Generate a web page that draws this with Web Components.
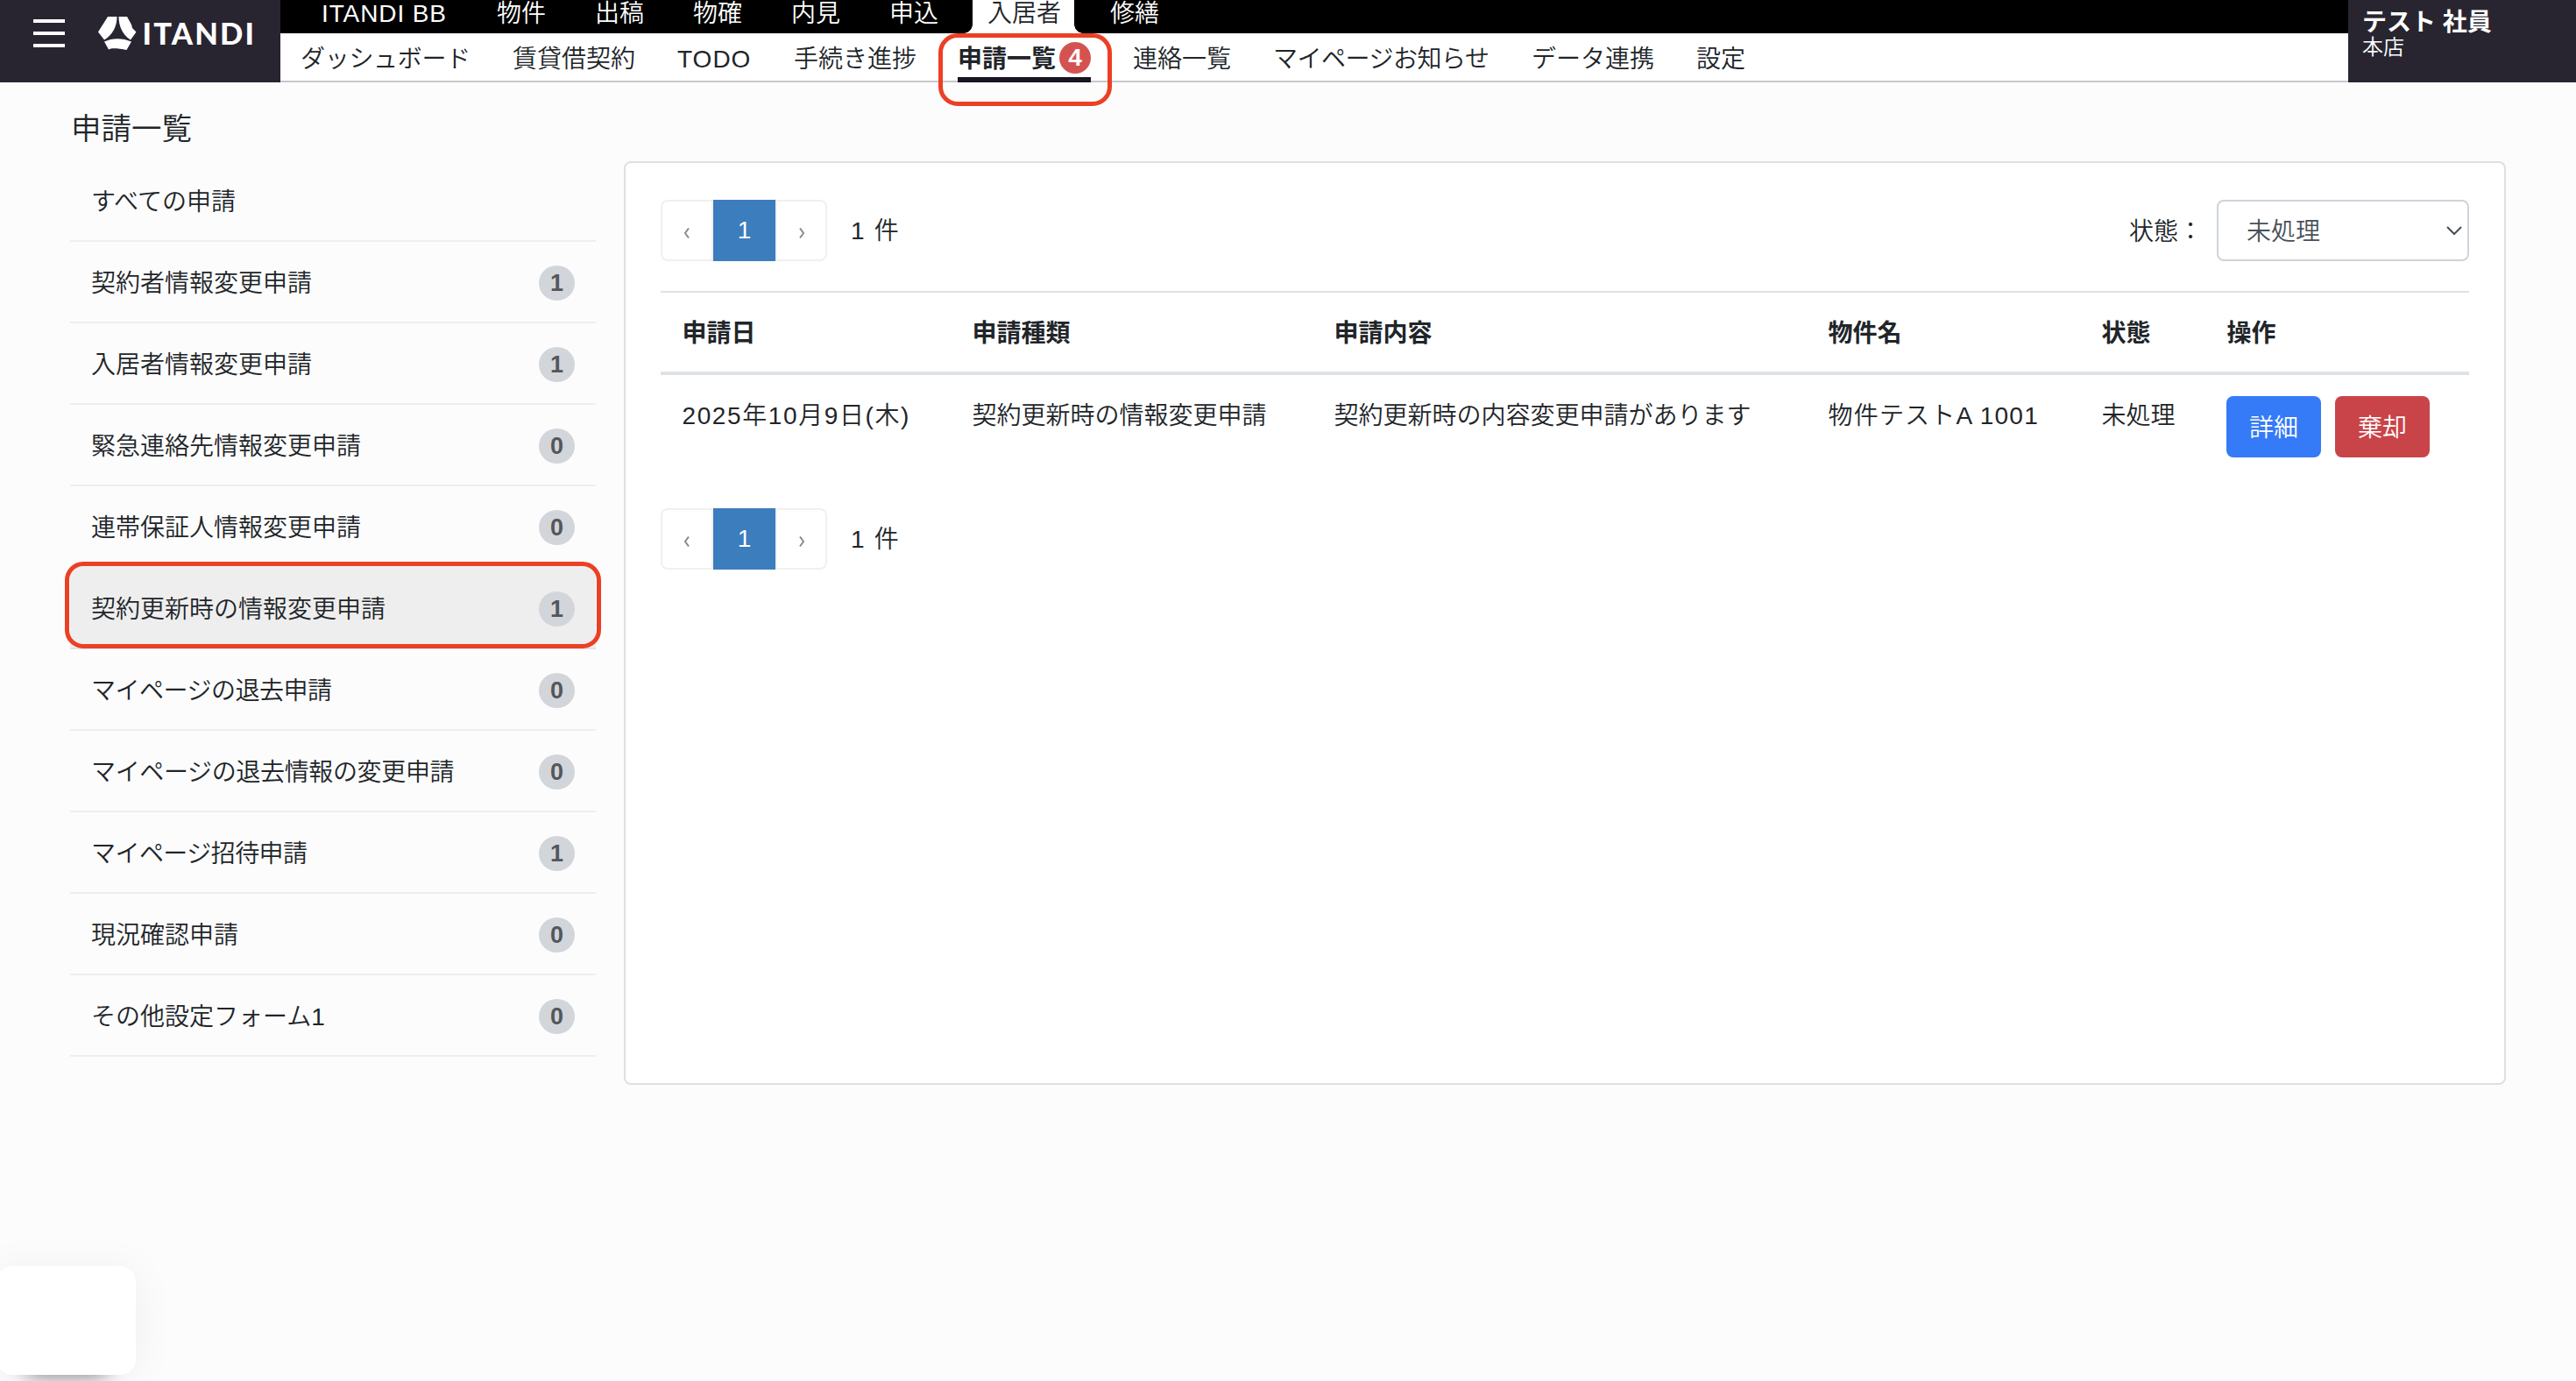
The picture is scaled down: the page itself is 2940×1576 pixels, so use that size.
<!DOCTYPE html>
<html lang="ja">
<head>
<meta charset="utf-8">
<title>申請一覧</title>
<style>
  html { height: 100%; overflow: hidden; }
  body {
    margin: 0;
    min-height: 100%;
    background: #fcfcfc;
    color: #212529;
    font: 28px/42px "Liberation Sans", "Noto Sans CJK JP", sans-serif;
    font-weight: 350;
  }
  main { display: flex; padding: 0 80px; gap: 32px; }
  aside { width: 600px; }
  h1 { margin: 0; height: 89px; box-sizing: border-box; padding: 28px 1px 0; font-size: 34.5px; line-height: 50px; font-weight: inherit; }
</style>
</head>
<body>
<app-header>
  <top-item slot="top" style="width:145px;letter-spacing:.9px;text-indent:1px">ITANDI BB</top-item>
  <top-item slot="top">物件</top-item>
  <top-item slot="top">出稿</top-item>
  <top-item slot="top">物確</top-item>
  <top-item slot="top">内見</top-item>
  <top-item slot="top">申込</top-item>
  <top-item slot="top" active>入居者</top-item>
  <top-item slot="top">修繕</top-item>

  <sub-item slot="sub" style="width:194px;letter-spacing:-.3px">ダッシュボード</sub-item>
  <sub-item slot="sub" style="width:140px">賃貸借契約</sub-item>
  <sub-item slot="sub" style="width:85px;letter-spacing:1px">TODO</sub-item>
  <sub-item slot="sub" style="width:139px">手続き進捗</sub-item>
  <sub-item slot="sub" active badge="4" style="width:152px">申請一覧</sub-item>
  <sub-item slot="sub" style="width:112px">連絡一覧</sub-item>
  <sub-item slot="sub" style="width:247px;letter-spacing:-.5px">マイページお知らせ</sub-item>
  <sub-item slot="sub" style="width:140px">データ連携</sub-item>
  <sub-item slot="sub" style="width:56px">設定</sub-item>

  <span slot="user">テスト 社員</span>
  <span slot="shop">本店</span>
</app-header>

<main>
  <aside>
    <h1>申請一覧</h1>
    <side-item>すべての申請</side-item>
    <side-item count="1">契約者情報変更申請</side-item>
    <side-item count="1">入居者情報変更申請</side-item>
    <side-item count="0">緊急連絡先情報変更申請</side-item>
    <side-item count="0">連帯保証人情報変更申請</side-item>
    <side-item count="1" active>契約更新時の情報変更申請</side-item>
    <side-item count="0" style="letter-spacing:-.5px">マイページの退去申請</side-item>
    <side-item count="0" style="letter-spacing:-.35px">マイページの退去情報の変更申請</side-item>
    <side-item count="1" style="letter-spacing:-.55px">マイページ招待申請</side-item>
    <side-item count="0">現況確認申請</side-item>
    <side-item count="0">その他設定フォーム1</side-item>
  </aside>
  <request-panel></request-panel>
</main>
<chat-launcher></chat-launcher>

<script>
  // base class: puts the element's template string into an open shadow root
  class BaseElement extends HTMLElement {
    constructor() {
      super();
      this.attachShadow({ mode: 'open' });
      this.shadowRoot.innerHTML = this.render();
    }
  }

  class AppHeader extends BaseElement {
    render() {
      return `
        <style>
          :host { display: flex; height: 94px; }
          .brand {
            box-sizing: border-box;
            width: 320px;
            padding: 0 0 0 38px;
            background: #282530;
          }
          .brand svg { display: block; }
          .nav { flex: 1; display: flex; flex-direction: column; }
          .top { display: flex; height: 38px; padding-left: 18px; background: #000; color: #fff; }
          .sub {
            display: flex;
            gap: 48px;
            height: 54px;
            padding-left: 23px;
            background: #fff;
            border-bottom: 2px solid #c8c7cf;
          }
          .user {
            box-sizing: border-box;
            width: 260px;
            padding: 10px 16px 0;
            background: #282530;
            color: #fff;
          }
          .name { font-weight: 700; line-height: 31px; }
          .shop { font-size: 24px; line-height: 26px; }
        </style>
        <div class="brand">
          <svg width="260" height="94" viewBox="38 0 260 94" fill="#fff">
            <path d="M38 22h36v4H38zM38 36h36v4H38zM38 50h36v4H38z"/>
            <path d="M123 19h10.500c0 11-5 21-14.500 26.500L112 36.500z"/>
            <path d="M135.500 19H145l5 9 1 4 4.500 4.500-6.500 9C140 40 135.500 30 135.500 19z"/>
            <path d="M119 47.500c9-4.500 21-4.500 31 0L144.500 57c-7-1.500-14-2-18-1.500l-2.500 1z"/>
            <text x="162.500" y="51" font-family="Lato, sans-serif" font-weight="900" font-size="34.500" textLength="127.500">ITANDI</text>
          </svg>
        </div>
        <div class="nav">
          <div class="top"><slot name="top"></slot></div>
          <div class="sub"><slot name="sub"></slot></div>
        </div>
        <div class="user">
          <div class="name"><slot name="user"></slot></div>
          <div class="shop"><slot name="shop"></slot></div>
        </div>
      `;
    }
  }

  class TopItem extends BaseElement {
    render() {
      return `
        <style>
          :host { display: block; padding: 0 28px; line-height: 31px; white-space: nowrap; }
          :host([active]) {
            color: #212529;
            /* white tab with corners flaring into the bar below */
            background:
              radial-gradient(circle at 0 0, #0000 9.500px, #fff 10px) 1px 100% / 10px 10px no-repeat,
              radial-gradient(circle at 100% 0, #0000 9.500px, #fff 10px) 127px 100% / 10px 10px no-repeat,
              linear-gradient(#fff, #fff) 11px 0 / 116px 100% no-repeat;
          }
        </style>
        <slot></slot>
      `;
    }
  }

  class SubItem extends BaseElement {
    render() {
      const badge = this.getAttribute('badge');
      return `
        <style>
          :host {
            display: flex;
            align-items: center;
            justify-content: space-between;
            height: 56px;
            position: relative;
            white-space: nowrap;
          }
          :host([active]) { font-weight: 700; }
          :host([active])::after {
            content: "";
            position: absolute;
            left: 0; right: 0; bottom: 0;
            height: 6px;
            background: #1a1522;
          }
          .label { padding-top: 3px; }
          .badge {
            width: 36px;
            height: 36px;
            line-height: 36px;
            border-radius: 50%;
            background: #d45351;
            color: #fff;
            text-align: center;
          }
          .mark {
            position: absolute;
            box-sizing: border-box;
            left: -22px;
            top: 0;
            width: 198px;
            height: 83px;
            border: 5px solid #eb4026;
            border-radius: 22px;
            z-index: 1;
          }
        </style>
        <span class="label"><slot></slot></span>
        ${badge ? `<span class="badge">${badge}</span><div class="mark"></div>` : ''}
      `;
    }
  }

  class SideItem extends BaseElement {
    render() {
      const count = this.getAttribute('count');
      return `
        <style>
          :host {
            display: flex;
            align-items: center;
            justify-content: space-between;
            box-sizing: border-box;
            position: relative;
            height: 93px;
            padding: 2px 24px 0;
            border-bottom: 2px solid #eee;
          }
          :host([active]) { background: #eee; border-color: #e2e2e2; }
          :host([active])::after {
            content: "";
            position: absolute;
            box-sizing: border-box;
            left: -6px;
            top: -7px;
            width: 612px;
            height: 99px;
            border: 5px solid #eb4026;
            border-radius: 21px;
          }
          .label { padding-top: 3px; }
          .count {
            width: 41px;
            height: 40px;
            line-height: 40px;
            border-radius: 50%;
            background: #d2d5da;
            color: #54575a;
            font-size: 27px;
            font-weight: 700;
            letter-spacing: 0;
            text-align: center;
          }
        </style>
        <span class="label"><slot></slot></span>
        ${count === null ? '' : `<span class="count">${count}</span>`}
      `;
    }
  }

  class PageNav extends BaseElement {
    render() {
      return `
        <style>
          :host { display: flex; align-items: center; height: 70px; }
          .box {
            display: grid;
            grid-template-columns: 60px 71px 59px;
            height: 70px;
            line-height: 70px;
            text-align: center;
          }
          .arrow {
            display: flex;
            align-items: center;
            justify-content: center;
            box-sizing: border-box;
            border: 2px solid #f0f0f1;
            padding-top: 6px;
          }
          .arrow:first-child { border-radius: 8px 0 0 8px; }
          .arrow:last-child { border-radius: 0 8px 8px 0; }
          .current { background: #3c7dbd; color: #fff; }
          .total { margin-left: 27px; padding-top: 2px; word-spacing: 3.500px; }
        </style>
        <div class="box">
          <span class="arrow"><svg width="8" height="12" fill="none" stroke="#8a8c90" stroke-width="2"><path d="M6 .5 2 6l4 5.500"/></svg></span>
          <span class="current">1</span>
          <span class="arrow"><svg width="8" height="12" fill="none" stroke="#8a8c90" stroke-width="2"><path d="M2 .5 6 6l-4 5.500"/></svg></span>
        </div>
        <span class="total">1 件</span>
      `;
    }
  }

  class StateSelect extends BaseElement {
    render() {
      return `
        <style>
          :host { display: flex; align-items: center; gap: 16px; }
          .label { padding-top: 3px; }
          .select {
            display: flex;
            align-items: center;
            justify-content: space-between;
            box-sizing: border-box;
            width: 288px;
            height: 70px;
            padding: 0 6px 0 32px;
            border: 2px solid #ced4da;
            border-radius: 8px;
            color: #495057;
          }
        </style>
        <span class="label">状態：</span>
        <div class="select">
          <span class="label"><slot></slot></span>
          <svg width="18" height="11" fill="none" stroke="#495057" stroke-width="2"><path d="M1 1l8 8 8-8"/></svg>
        </div>
      `;
    }
  }

  class ActionButton extends BaseElement {
    render() {
      return `
        <style>
          :host {
            display: inline-block;
            width: 108px;
            height: 70px;
            line-height: 73px;
            border-radius: 8px;
            background: #357af6;
            color: #fff;
            text-align: center;
          }
          :host([danger]) { background: #c94449; }
        </style>
        <slot></slot>
      `;
    }
  }

  class RequestPanel extends BaseElement {
    render() {
      return `
        <style>
          :host {
            display: block;
            box-sizing: border-box;
            width: 2148px;
            height: 1054px;
            margin-top: 90px;
            padding: 42px 40px;
            border: 2px solid #dedfe1;
            border-radius: 8px;
            background: #fff;
          }
          .bar { display: flex; justify-content: space-between; }
          .row {
            display: grid;
            grid-template-columns: 331px 413px 564px 312px 143px 1fr;
            white-space: nowrap;
          }
          .row > span { padding: 26px 0 22px 24.500px; }
          .head {
            margin-top: 34px;
            border-top: 2px solid #dee2e6;
            border-bottom: 4px solid #dee2e6;
            font-weight: 700;
          }
          .date { letter-spacing: 1.600px; }
          .room { letter-spacing: 1.200px; }
          .actions { display: flex; gap: 16px; padding: 24px 0 24px 24px; }
          .bottom { margin-top: 34px; }
        </style>
        <div class="bar">
          <page-nav></page-nav>
          <state-select>未処理</state-select>
        </div>
        <div class="row head">
          <span>申請日</span><span>申請種類</span><span>申請内容</span><span>物件名</span><span>状態</span><span>操作</span>
        </div>
        <div class="row">
          <span class="date">2025年10月9日(木)</span>
          <span>契約更新時の情報変更申請</span>
          <span>契約更新時の内容変更申請があります</span>
          <span class="room">物件テストA 1001</span>
          <span>未処理</span>
          <div class="actions">
            <action-button>詳細</action-button>
            <action-button danger>棄却</action-button>
          </div>
        </div>
        <page-nav class="bottom"></page-nav>
      `;
    }
  }

  class ChatLauncher extends BaseElement {
    render() {
      return `
        <style>
          :host {
            position: fixed;
            left: -4px;
            bottom: 7px;
            width: 159px;
            height: 124px;
            border-radius: 18px;
            background: #fff;
            box-shadow: 0 4px 48px rgba(0, 0, 0, .06), 0 34px 24px -34px rgba(0, 0, 0, .5);
          }
        </style>
      `;
    }
  }

  customElements.define('app-header', AppHeader);
  customElements.define('top-item', TopItem);
  customElements.define('sub-item', SubItem);
  customElements.define('side-item', SideItem);
  customElements.define('page-nav', PageNav);
  customElements.define('state-select', StateSelect);
  customElements.define('action-button', ActionButton);
  customElements.define('request-panel', RequestPanel);
  customElements.define('chat-launcher', ChatLauncher);
</script>
</body>
</html>
